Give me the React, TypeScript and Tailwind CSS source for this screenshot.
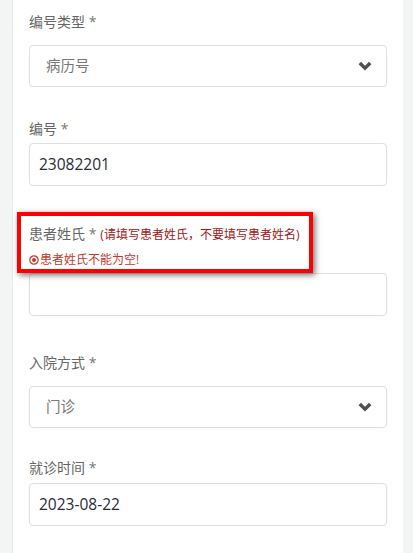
import React from "react";

const font = { fontFamily: '"Open Sans", "Noto Sans CJK SC", sans-serif' };

function Chevron() {
  return (
    <svg width="14" height="10" viewBox="0 0 14 10" className="shrink-0">
      <path d="M1.8 2 L7 7.2 L12.2 2" fill="none" stroke="#505050" strokeWidth="3.4" strokeLinecap="butt" strokeLinejoin="miter" />
    </svg>
  );
}

function Label({ text }: { text: string }) {
  return (
    <div className="h-5 text-[14px] leading-5 text-[#666]">
      {text} <span className="text-[#777]">*</span>
    </div>
  );
}

function SelectBox({ value }: { value: string }) {
  return (
    <div className="h-[42px] border border-[#dedede] rounded-[4px] flex items-center justify-between pl-4 pr-[14px]">
      <span className="text-[14.5px] text-[#777]">{value}</span>
      <Chevron />
    </div>
  );
}

function InputBox({ value }: { value: string }) {
  return (
    <div className="h-[43px] border border-[#dedede] rounded-[4px] flex items-center px-[9px]">
      <span className="text-[15.5px] text-[#2a2a3a]">{value}</span>
    </div>
  );
}

export default function App() {
  return (
    <div className="min-h-[553px] h-[553px] overflow-hidden bg-[#f3f4f4] pl-[12px] pr-[10px]" style={font}>
      <div className="relative h-full bg-white border-l border-[#e8e8e8] px-4 pt-3">
        <Label text="编号类型" />
        <div className="mt-[13px]">
          <SelectBox value="病历号" />
        </div>

        <div className="mt-[32px]">
          <Label text="编号" />
        </div>
        <div className="mt-1">
          <InputBox value="23082201" />
        </div>

        <div className="mt-[38px] h-5 leading-5 flex items-baseline">
          <span className="text-[14px] text-[#666]">患者姓氏 <span className="text-[#777]">*</span></span>
          <span className="ml-1 text-[12px] text-[#a11616]">(请填写患者姓氏，不要填写患者姓名)</span>
        </div>
        <div className="mt-[6px] h-5 leading-5 flex items-center text-[12px] text-[#c0392b]">
          <svg width="10" height="10" viewBox="0 0 10 10" className="mr-[1px]">
            <circle cx="5" cy="5" r="4.2" fill="none" stroke="#c0392b" strokeWidth="1.2" />
            <circle cx="5" cy="5" r="2" fill="#c0392b" />
          </svg>
          <span>患者姓氏不能为空!</span>
        </div>
        <div className="mt-[3px]">
          <InputBox value="" />
        </div>

        <div className="mt-[37px]">
          <Label text="入院方式" />
        </div>
        <div className="mt-[13px]">
          <SelectBox value="门诊" />
        </div>

        <div className="mt-[30px]">
          <Label text="就诊时间" />
        </div>
        <div className="mt-[5px]">
          <InputBox value="2023-08-22" />
        </div>

        <div className="absolute left-[4px] top-[212px] w-[296px] h-[61px] border-[4px] border-[#ff0000] shadow-[2px_2px_6px_rgba(0,0,0,0.55)] pointer-events-none" />
      </div>
    </div>
  );
}
